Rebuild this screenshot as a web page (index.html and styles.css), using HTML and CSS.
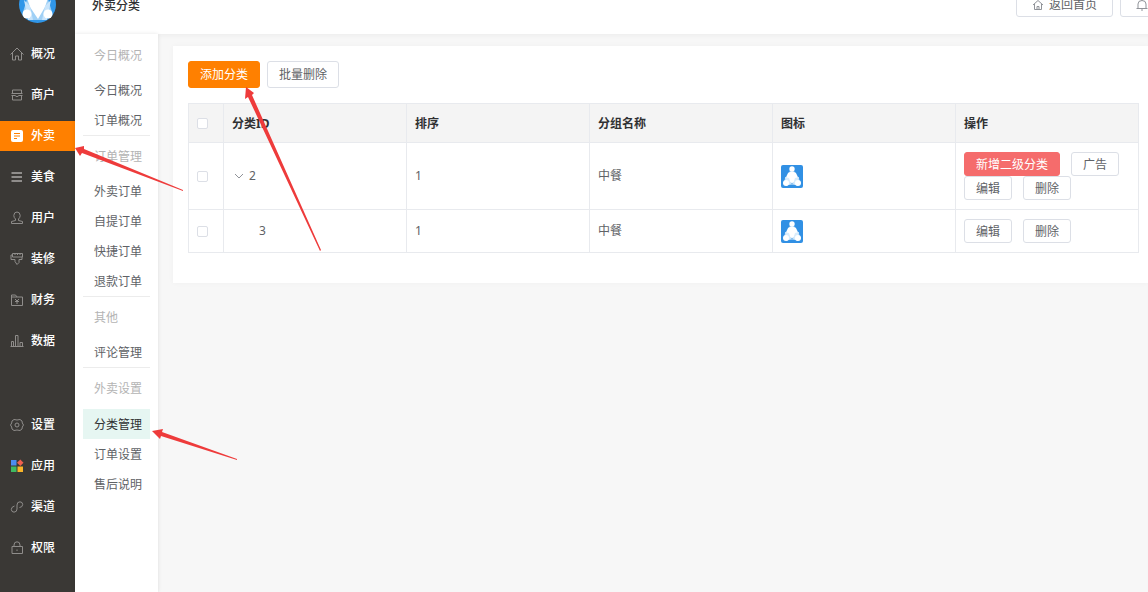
FILE: index.html
```html
<!DOCTYPE html>
<html lang="zh-CN">
<head>
<meta charset="utf-8">
<title>外卖分类</title>
<link rel="stylesheet" href="styles.css">
</head>
<body>
<svg class="defs" aria-hidden="true">
  <symbol id="people" viewBox="0 0 22 23">
    <path d="M8 7Q11 3 14 7L18 13 19 17 15 20H7L3 17 4 13Z" fill="#8cc3f0"/>
    <path d="M7 8Q11 5 15 8L17 13 14 17 11 18 8 17 5 13Z" fill="#fff"/>
    <path d="M4 12L8 13 10 19 5 21ZM18 12L14 13 12 19 17 21Z" fill="#d8ecfc"/>
    <circle cx="11" cy="4" r="2.700" fill="#fff"/><circle cx="5" cy="18" r="3" fill="#fff"/><circle cx="17" cy="18" r="3" fill="#fff"/>
  </symbol>
</svg>
<div class="app">
  <nav class="rail">
    <svg class="logo" viewBox="0 0 37 37"><circle cx="18.500" cy="18.500" r="18.500" fill="#3096e8"/><path d="M9 10H28L33 26 26 34H11L4 26Z" fill="#9fd0f6"/><path d="M8 12H29L26 21 19 33 11 21Z" fill="#fff"/><path d="M5 14L11 20 14 34H9ZM32 14L26 20 23 34H28Z" fill="#c8e4fb"/><circle cx="18.500" cy="7" r="4" fill="#fff"/><circle cx="8" cy="28" r="4.500" fill="#fff"/><circle cx="29" cy="28" r="4.500" fill="#fff"/></svg>
    <a class="rail-item" href="#"><svg viewBox="0 0 14 14"><path d="M.5 7.500L7 1 13.500 7.500M2.500 6V13H5.500V9H8.500V13H11.500V6"/></svg>概况</a>
    <a class="rail-item" href="#"><svg viewBox="0 0 14 14"><path d="M2.500 2H11.500V5.500H2.500ZM1.500 5.500H12.500M2.500 7V12H11.500V7M1.500 7.500H5Q7 10 9 7.500H12.500"/></svg>商户</a>
    <a class="rail-item active" href="#"><svg viewBox="0 0 14 14"><rect class="solid" x="1" y="1" width="12" height="12" rx="2"/><path class="cut" d="M4 4.500H10M4 7H10M4 9.500H7"/></svg>外卖</a>
    <a class="rail-item" href="#"><svg viewBox="0 0 14 14"><path class="thick" d="M1.500 3H12M1.500 7H12M1.500 11H12"/></svg>美食</a>
    <a class="rail-item" href="#"><svg viewBox="0 0 14 14"><path d="M5.500 8Q3.800 6.500 3.800 4.500Q4 1 7 1Q10 1 10.200 4.500Q10.200 6.500 8.500 8V9.500L12.500 10.500V12.500H1.500V10.500L5.500 9.500Z"/></svg>用户</a>
    <a class="rail-item" href="#"><svg viewBox="0 0 14 14"><path d="M2.500 1.500H12.500V5H2.500ZM2.500 3H1V7.500H5V9.500L7 12.500 9 10.500V7.500H12V5M5 1.500V3M7.500 1.500V3M10 1.500V3"/></svg>装修</a>
    <a class="rail-item" href="#"><svg viewBox="0 0 14 14"><path d="M1.500 12.500V2H5.500L7 4H12.500V12.500ZM1.500 4H7M5 6L7 8 9 6M7 8V11M5 8.500H9"/></svg>财务</a>
    <a class="rail-item" href="#"><svg viewBox="0 0 14 14"><path d="M1.500 7.500H3.500V12.500H1.500ZM5.500 1.500H8V12.500H5.500ZM10 8.500H12.500V12.500H10ZM.5 12.500H13.500"/></svg>数据</a>
    <a class="rail-item split" href="#"><svg viewBox="0 0 14 14"><path d="M4 1.500L7 2 10 1.500 12 3 12.300 5 13.500 7 12.300 9 12 11 10 12.500 7 12 4 12.500 2 11 1.700 9 .5 7 1.700 5 2 3Z"/><circle cx="7" cy="7" r="2"/></svg>设置</a>
    <a class="rail-item" href="#"><svg viewBox="0 0 14 14"><rect x="1" y="1" width="5.500" height="5.500" fill="#4c8df0" stroke="none"/><path d="M10.300 .5L13.500 3.700 10.300 7 7 3.700Z" fill="#f0604f" stroke="none"/><rect x="1" y="7.500" width="5.500" height="5.500" fill="#3fba62" stroke="none"/><rect x="7.500" y="7.500" width="5.500" height="5.500" fill="#f9b529" stroke="none"/></svg>应用</a>
    <a class="rail-item" href="#"><svg viewBox="0 0 14 14"><path d="M4.500 6Q1.200 7 1.300 9.500Q1.500 12 4 12.200Q7 12 7 9V5Q7 1.800 10 1.800Q12.700 2 12.700 4.500Q12.500 7.300 9.500 7.500"/></svg>渠道</a>
    <a class="rail-item" href="#"><svg viewBox="0 0 14 14"><path d="M2 5.500H12.500V12.500H2ZM4 5.500V4Q4 .8 7 .8Q10 .8 10 4V5.500M7 8.500V10"/></svg>权限</a>
  </nav>
  <div class="workspace">
    <header class="topbar">
      <h1>外卖分类</h1>
      <div class="top-actions">
        <button class="btn top"><svg viewBox="0 0 12 12"><path d="M1 6L6 1.500 11 6M2.500 5V10.500H9.500V5M5 10.500V7.500H7V10.500"/></svg>返回首页</button>
        <button class="btn top" aria-label="通知"><svg viewBox="0 0 12 12"><path d="M.5 9.500H11.500M2 9.500V5Q2 1.500 6 1.500Q10 1.500 10 5V9.500M6 .5V1.500M5 11H7"/></svg></button>
      </div>
    </header>
    <div class="body">
      <nav class="submenu">
        <section><h2>今日概况</h2><a href="#">今日概况</a><a href="#">订单概况</a></section>
        <section><h2>订单管理</h2><a href="#">外卖订单</a><a href="#">自提订单</a><a href="#">快捷订单</a><a href="#">退款订单</a></section>
        <section><h2>其他</h2><a href="#">评论管理</a></section>
        <section><h2>外卖设置</h2><a class="current" href="#">分类管理</a><a href="#">订单设置</a><a href="#">售后说明</a></section>
      </nav>
      <main class="content">
        <div class="card">
          <div class="toolbar"><button class="btn primary">添加分类</button><button class="btn">批量删除</button></div>
          <table>
            <thead><tr><th class="check"><input type="checkbox" aria-label="全选"></th><th>分类ID</th><th>排序</th><th>分组名称</th><th>图标</th><th>操作</th></tr></thead>
            <tbody>
              <tr class="parent">
                <td class="check"><input type="checkbox" aria-label="选择 2"></td>
                <td><span class="tree"><svg viewBox="0 0 10 10"><path d="M1 3L5 7 9 3"/></svg>2</span></td>
                <td>1</td><td>中餐</td>
                <td><svg class="thumb"><use href="#people"/></svg></td>
                <td><div class="ops"><button class="btn small danger">新增二级分类</button><button class="btn small">广告</button><button class="btn small">编辑</button><button class="btn small">删除</button></div></td>
              </tr>
              <tr>
                <td class="check"><input type="checkbox" aria-label="选择 3"></td>
                <td><span class="child">3</span></td>
                <td>1</td><td>中餐</td>
                <td><svg class="thumb"><use href="#people"/></svg></td>
                <td><div class="ops"><button class="btn small">编辑</button><button class="btn small">删除</button></div></td>
              </tr>
            </tbody>
          </table>
        </div>
      </main>
    </div>
  </div>
</div>
<svg class="arrows" width="340" height="480" viewBox="0 0 340 480" aria-hidden="true">
  <path d="M75 148L84 146 84 149 183 190 183 191 82 153 80 156Z"/>
  <path d="M246 87L254 93 252 95 321 250 320 251 248 97 245 99Z"/>
  <path d="M152 431L163 429 162 432 237 459 237 460 161 436 160 439Z"/>
</svg>
</body>
</html>
```
FILE: styles.css
```css
* { box-sizing: border-box; }
body {
  margin: 0;
  font: 12px/18px "Noto Sans", "Noto Sans CJK SC", sans-serif;
  color: #606266;
  background: #f7f7f7;
}
a { color: inherit; text-decoration: none; }
h1, h2 { margin: 0; font-size: 12px; }
svg { fill: none; stroke: currentColor; }
.defs { position: absolute; width: 0; height: 0; }
.defs symbol, .thumb, .logo { stroke: none; }
.app { display: flex; height: 100vh; overflow: hidden; }

.rail {
  flex: none;
  width: 75px;
  display: flex;
  flex-direction: column;
  gap: 11px;
  background: #3a3835;
}
.logo { flex: none; width: 37px; height: 37px; margin: -14px auto 5px; }
.rail-item {
  flex: none;
  display: flex;
  align-items: center;
  gap: 7px;
  height: 30px;
  padding-left: 10px;
  color: #fff;
  font-weight: 500;
}
.rail-item svg { width: 14px; height: 14px; color: #8f8d8b; }
.rail-item.active { background: #ff8000; }
.rail-item.split { margin-top: 43px; }
.solid { fill: #fff; stroke: none; }
.cut { stroke: #ff8000; }
.thick { stroke-width: 2; }

.workspace { flex: 1; min-width: 0; display: flex; flex-direction: column; }
.topbar {
  flex: none;
  display: flex;
  justify-content: space-between;
  height: 34px;
  padding-left: 17px;
  background: #fff;
}
.topbar h1 { margin-top: -3px; color: #303133; font-weight: 500; }
.top-actions { display: flex; gap: 7px; margin: -10px -16px 0 0; }
.body { flex: 1; min-height: 0; display: flex; }

.submenu {
  flex: none;
  width: 83px;
  padding: 1px 8px 0;
  background: #fff;
  box-shadow: 0 0 4px rgba(0, 0, 0, .1);
}
.submenu section + section { border-top: 1px solid #ececec; }
.submenu h2 { padding: 1px 0 0 11px; line-height: 39px; color: #b4b4b4; font-weight: 400; }
.submenu a { display: block; padding: 1px 0 0 11px; line-height: 29px; }
.submenu h2 + .current { margin-top: 1px; }
.submenu .current { background: #e6f6f2; color: #303133; }

.content {
  flex: 1;
  min-width: 0;
  padding: 12px 0 0 15px;
  box-shadow: inset 0 4px 4px -2px rgba(0, 0, 0, .04);
}
.card { padding: 15px 9px 30px 15px; background: #fff; box-shadow: 0 0 6px rgba(0, 0, 0, .03); }
.toolbar { display: flex; gap: 7px; margin-bottom: 15px; }

.btn {
  height: 27px;
  padding: 1px 11px 0;
  border: 1px solid #dcdfe6;
  border-radius: 3px;
  background: #fff;
  color: #606266;
  font: inherit;
  white-space: nowrap;
}
.btn.primary { background: #ff8000; border-color: #ff8000; color: #fff; }
.btn.small { height: 24px; }
.btn.danger { background: #f56c6c; border-color: #f56c6c; color: #fff; }
.btn.top { display: flex; align-items: center; gap: 5px; padding: 2px 15px 0; }
.btn.top svg { width: 12px; height: 12px; color: #909399; }

table { width: 100%; table-layout: fixed; border-collapse: collapse; }
th, td { height: 43px; padding: 0 8px; border: 1px solid #e8eaee; text-align: left; }
th { height: 39px; padding-top: 2px; background: #f4f4f4; color: #303133; font-weight: 700; }
th.check { padding-top: 0; }
.parent td { height: 67px; }
.check { width: 35px; }
input {
  appearance: none;
  display: block;
  width: 11px;
  height: 11px;
  margin: 0;
  border: 1px solid #dcdfe6;
  border-radius: 2px;
  background: #fff;
}
.tree { display: flex; align-items: center; gap: 5px; padding-left: 2px; }
.tree svg { width: 10px; height: 10px; color: #909399; }
.child { padding-left: 27px; }
.thumb { display: block; width: 22px; height: 23px; border-radius: 2px; background: #3190e4; }
.ops { display: flex; flex-wrap: wrap; column-gap: 11px; }

.arrows { position: absolute; top: 0; left: 0; fill: #ee3b3b; stroke: none; pointer-events: none; }
```
